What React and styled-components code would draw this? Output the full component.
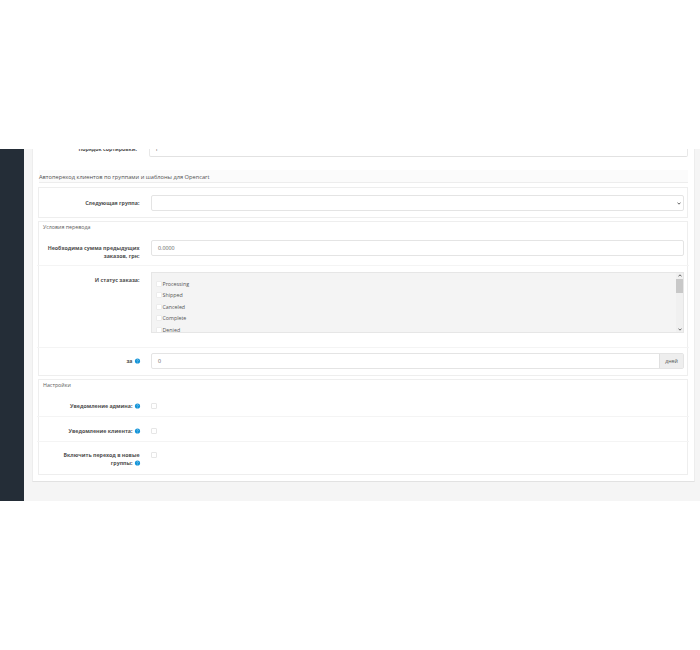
import React from "react";
import styled, { createGlobalStyle } from "styled-components";

const GlobalStyle = createGlobalStyle`
  * { box-sizing: border-box; }
  body { margin: 0; background: #fff; font-family: "Open Sans", sans-serif; color: #555; font-size: 5.3px; }
`;

const Page = styled.div`
  display: flex;
  width: 700px;
  height: 352px;
  margin-top: 149px;
  overflow: hidden;
  background: #f5f5f5;
`;

const Sidebar = styled.aside`
  flex: 0 0 24px;
  background: #242d37;
`;

const Panel = styled.main`
  width: 663px;
  height: 333px;
  margin-left: 8px;
  padding: 0 6px;
  background: #fff;
  border: 1px solid #ededed;
  border-top: 0;
  border-bottom-color: #e2e2e2;
`;

const SortRow = styled.div`
  display: flex;
  height: 21px;
  overflow: hidden;
`;

const SortLabel = styled.label`
  width: 98px;
  margin-top: -4px;
  line-height: 8px;
  text-align: right;
  font-weight: 700;
  font-size: 5.2px;
  color: #505050;
`;

const SortInput = styled.div`
  width: 539px;
  height: 16px;
  margin: -8px 0 0 12px;
  padding: 3px 5px;
  line-height: 9px;
  border: 1px solid #e8e8e8;
  border-bottom-color: #e2e2e2;
  border-radius: 2px;
`;

const Legend = styled.h2`
  height: 13px;
  margin: 0 0 4px;
  width: 649px;
  background: #fbfbfb;
  border-bottom: 1px solid #ededed;
  font-size: 5.69px;
  font-weight: 400;
  line-height: 14px;
  white-space: nowrap;
  color: #505050;
`;

const Box = styled.section`
  width: 650px;
  height: ${(p) => p.$h}px;
  margin-left: -1px;
  margin-bottom: 3px;
  border: 1px solid #eeeeee;
`;

const BoxTitle = styled.h3`
  height: ${(p) => p.$h}px;
  margin: 0;
  padding-left: 4px;
  font-size: 5.3px;
  font-weight: 400;
  line-height: 11px;
  color: #5c5c5c;
`;

const Row = styled.div`
  display: flex;
  width: 652px;
  height: ${(p) => p.$h}px;
  margin-left: -2px;
  padding: ${(p) => p.$top}px 0 0 2px;
  border-bottom: ${(p) => (p.$line ? "1px solid #f4f4f4" : "0")};
`;

const Label = styled.label`
  flex: 0 0 101px;
  height: 16px;
  margin-top: ${(p) => p.$shift || 0}px;
  padding-right: 0.5px;
  text-align: right;
  font-size: 5.28px;
  font-weight: 700;
  line-height: 8px;
  white-space: pre-line;
  color: #505050;
`;

const HelpIcon = styled.svg`
  width: 5px;
  height: 5px;
  margin-left: 2px;
  vertical-align: -0.5px;
  overflow: visible;
`;

const Field = styled.div`
  display: flex;
  justify-content: space-between;
  width: 533px;
  height: 16px;
  margin-left: 11px;
  padding-left: 6px;
  border: 1px solid #e4e4e4;
  border-radius: 2px;
  line-height: 14px;
  color: #606060;
`;

const Arrow = styled.svg`
  width: 4px;
  height: 3px;
  margin: ${(p) => p.$m || "0"};
`;

const Addon = styled.span`
  width: 24px;
  background: #eee;
  border-left: 1px solid #e0e0e0;
  text-align: center;
  color: #555;
`;

const StatusList = styled.div`
  display: flex;
  justify-content: space-between;
  width: 533px;
  height: 61px;
  margin-left: 11px;
  overflow: hidden;
  background: #f4f4f4;
  border: 1px solid #e6e6e6;
`;

const Options = styled.div`
  padding: 6px 0 0 4px;
`;

const Option = styled.label`
  display: flex;
  height: 11.45px;
  line-height: 11px;
  color: #555;
`;

const Check = styled.span`
  width: ${(p) => p.$size}px;
  height: ${(p) => p.$size}px;
  margin: ${(p) => p.$m};
  background: #fff;
  border: 1px solid ${(p) => p.$edge};
  border-radius: 1px;
`;

const Scrollbar = styled.div`
  display: flex;
  flex-direction: column;
  align-items: center;
  width: 7px;
  background: #f0f0f0;
`;

const Thumb = styled.div`
  width: 7px;
  height: 14px;
  margin: 2px 0 auto;
  background: #c8c8c8;
`;

function Help() {
  return (
    <HelpIcon viewBox="0 0 10 10">
      <circle cx="5" cy="4" r="5.2" fill="#1494d8" />
      <path d="M3.4 2.8Q3.5 1.3 5 1.3T6.6 2.8Q6.6 3.7 5.1 4.4V5M5.1 6.2V7.2" fill="none" stroke="#b5def5" strokeWidth="1" />
    </HelpIcon>
  );
}

function Chevron({ up, m }) {
  return (
    <Arrow viewBox="0 0 4 3" $m={m}>
      <path d={up ? "M.5 2.4 2 .8 3.5 2.4" : "M.5 .6 2 2.2 3.5 .6"} fill="none" stroke="#666" />
    </Arrow>
  );
}

function SettingCheck() {
  return <Check $size={6} $m="3px 0 0 11px" $edge="#e6e6e6" />;
}

const statuses = ["Processing", "Shipped", "Canceled", "Complete", "Denied"];

export default function App() {
  return (
    <>
      <GlobalStyle />
      <Page>
        <Sidebar />
        <Panel>
          <SortRow>
            <SortLabel>Порядок сортировки:</SortLabel>
            <SortInput>1</SortInput>
          </SortRow>
          <Legend>Автопереход клиентов по группами и шаблоны для Opencart</Legend>
          <Box $h={31}>
            <Row $h={29} $top={7}>
              <Label $shift={4}>Следующая группа:</Label>
              <Field><span /><Chevron m="6px 2px 0 0" /></Field>
            </Row>
          </Box>
          <Box $h={155}>
            <BoxTitle $h={11}>Условия перевода</BoxTitle>
            <Row $h={33} $top={7} $line>
              <Label $shift={4}>{"Необходима сумма предыдущих\nзаказов, грн:"}</Label>
              <Field>0.0000</Field>
            </Row>
            <Row $h={82} $top={6} $line>
              <Label $shift={4}>И статус заказа:</Label>
              <StatusList>
                <Options>
                  {statuses.map((name) => (
                    <Option key={name}>
                      <Check $size={6} $m="2px 0.5px 0 0" $edge="#ececec" />
                      {name}
                    </Option>
                  ))}
                </Options>
                <Scrollbar>
                  <Chevron up m="1px 0 0" />
                  <Thumb />
                  <Chevron m="0 0 1px" />
                </Scrollbar>
              </StatusList>
            </Row>
            <Row $h={27} $top={5}>
              <Label $shift={4}>за<Help /></Label>
              <Field>0<Addon>дней</Addon></Field>
            </Row>
          </Box>
          <Box $h={96}>
            <BoxTitle $h={12}>Настройки</BoxTitle>
            <Row $h={25} $top={8} $line>
              <Label $shift={2}>Уведомление админа:<Help /></Label>
              <SettingCheck />
            </Row>
            <Row $h={25} $top={8} $line>
              <Label $shift={2}>Уведомление клиента:<Help /></Label>
              <SettingCheck />
            </Row>
            <Row $h={30} $top={7}>
              <Label $shift={2}>{"Включить переход в новые\nгруппы:"}<Help /></Label>
              <SettingCheck />
            </Row>
          </Box>
        </Panel>
      </Page>
    </>
  );
}
